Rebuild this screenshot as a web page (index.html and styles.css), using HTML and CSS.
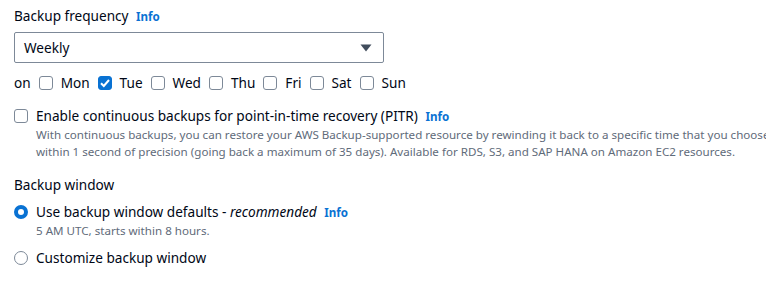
FILE: index.html
```html
<!DOCTYPE html>
<html>
<head>
<meta charset="utf-8">
<link rel="stylesheet" href="styles.css">
</head>
<body>
<div class="page">
  <div class="field freq">
    <div class="label">Backup frequency <a class="info">Info</a></div>
    <div class="select">
      <span>Weekly</span>
      <svg class="caret" width="12" height="8" viewBox="0 0 12 8"><path d="M0.5 0.5 H11.5 L6 7.5 Z" fill="#414d5c"/></svg>
    </div>
  </div>
  <div class="days">
    <span class="on">on</span>
    <label class="day"><span class="cb"></span>Mon</label>
    <label class="day"><span class="cb checked"><svg width="14" height="14" viewBox="0 0 14 14"><path d="M3 7.2 L5.8 10 L11 4" fill="none" stroke="#fff" stroke-width="2"/></svg></span>Tue</label>
    <label class="day"><span class="cb"></span>Wed</label>
    <label class="day"><span class="cb"></span>Thu</label>
    <label class="day"><span class="cb"></span>Fri</label>
    <label class="day"><span class="cb"></span>Sat</label>
    <label class="day"><span class="cb"></span>Sun</label>
  </div>
  <div class="option pitr">
    <span class="cb"></span>
    <div class="opt-body">
      <div class="opt-label">Enable continuous backups for point-in-time recovery (PITR) <a class="info">Info</a></div>
      <div class="desc">With continuous backups, you can restore your AWS Backup-supported resource by rewinding it back to a specific time that you choose within 1 second of precision (going back a maximum of 35 days). Available for RDS, S3, and SAP HANA on Amazon EC2 resources.</div>
    </div>
  </div>
  <div class="label window">Backup window</div>
  <div class="option radio-opt">
    <span class="radio checked"></span>
    <div class="opt-body">
      <div class="opt-label">Use backup window defaults - <em>recommended</em> <a class="info">Info</a></div>
      <div class="desc">5 AM UTC, starts within 8 hours.</div>
    </div>
  </div>
  <div class="option radio-opt second">
    <span class="radio"></span>
    <div class="opt-body">
      <div class="opt-label">Customize backup window</div>
    </div>
  </div>
</div>
</body>
</html>
```

FILE: styles.css
```css
* { box-sizing: border-box; }
html, body { margin: 0; padding: 0; background: #fff; }
body {
  font-family: "Noto Sans", "Open Sans", sans-serif;
  font-size: 13.6px;
  line-height: 20px;
  color: #000716;
  overflow: hidden;
}
.page { padding: 5px 0 0 14px; width: 800px; }
.label { line-height: 22px; }
.info {
  color: #0972d3;
  font-weight: 700;
  font-size: 11.6px;
  margin-left: 4px;
}
.select {
  margin-top: 4px;
  width: 370px;
  height: 31px;
  border: 1px solid #7d8998;
  border-radius: 2px;
  display: flex;
  align-items: center;
  justify-content: space-between;
  padding: 0 11px 0 9px;
}
.caret { display: block; }
.days {
  display: flex;
  align-items: center;
  gap: 8px;
  margin-top: 10px;
  height: 20px;
}
.day { display: flex; align-items: center; gap: 8px; }
.cb {
  width: 14px;
  height: 14px;
  border: 1px solid #7d8998;
  border-radius: 3px;
  flex: none;
  display: flex;
  align-items: center;
  justify-content: center;
}
.cb.checked { background: #0972d3; border-color: #0972d3; }
.cb.checked svg { display: block; margin: -1px; }
.option { display: flex; gap: 8px; }
.option .cb, .option .radio { margin-top: 2px; }
.pitr { margin-top: 14px; }
.opt-label { line-height: 18px; }
.desc { font-size: 11.6px; line-height: 17px; color: #5f6b7a; }
.window { margin-top: 14px; }
.radio-opt { margin-top: 7px; }
.radio-opt.second { margin-top: 10px; }
.radio {
  width: 14px;
  height: 14px;
  border: 1.5px solid #7d8998;
  border-radius: 50%;
  flex: none;
}
.radio.checked { border: 4px solid #0972d3; background: #fff; }
em { font-style: italic; }
```
